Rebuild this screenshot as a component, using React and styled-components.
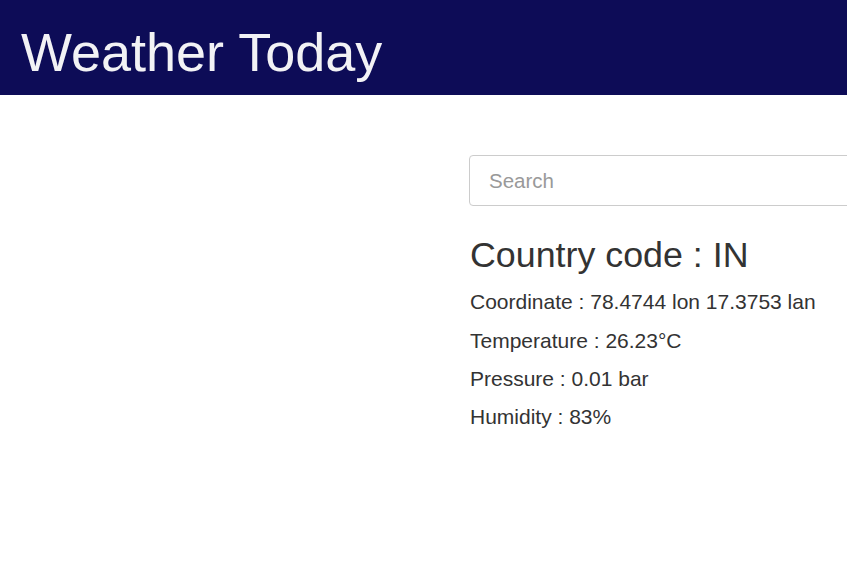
import React from "react";
import styled, { createGlobalStyle } from "styled-components";

const GlobalStyle = createGlobalStyle`
  html, body {
    margin: 0;
    padding: 0;
    background: #ffffff;
    font-family: "Liberation Sans", Arial, sans-serif;
    color: #333333;
  }
`;

const Header = styled.header`
  background-color: #0d0c57;
  height: 95px;
  display: flex;
  align-items: center;
  padding-left: 21px;
  box-sizing: border-box;
`;

const Title = styled.h1`
  margin: 0;
  margin-top: 8px;
  font-size: 54px;
  font-weight: 400;
  color: #f2f2f5;
  line-height: 1;
`;

const Main = styled.main`
  display: grid;
  grid-template-columns: 469px 1fr;
  padding-top: 60px;
`;

const Panel = styled.section`
  grid-column: 2;
  display: flex;
  flex-direction: column;
`;

const SearchInput = styled.input`
  box-sizing: border-box;
  width: 400px;
  height: 51px;
  border: 1px solid #cccccc;
  border-radius: 4px;
  padding: 0 19px;
  font-family: "Liberation Sans", Arial, sans-serif;
  font-size: 20.5px;
  color: #555555;
  outline: none;

  &::placeholder {
    color: #999999;
  }
`;

const CountryCode = styled.h2`
  margin: 30px 0 0 1px;
  font-size: 35.8px;
  font-weight: 400;
  line-height: 1.1;
`;

const InfoList = styled.div`
  display: flex;
  flex-direction: column;
  gap: 14.3px;
  margin-top: 15px;
  margin-left: 1px;
`;

const Info = styled.p`
  margin: 0;
  font-size: 21px;
  line-height: 24px;
`;

export default function App() {
  const rows = [
    "Coordinate : 78.4744 lon 17.3753 lan",
    "Temperature : 26.23°C",
    "Pressure : 0.01 bar",
    "Humidity : 83%",
  ];

  return (
    <>
      <GlobalStyle />
      <Header>
        <Title>Weather Today</Title>
      </Header>
      <Main>
        <Panel>
          <SearchInput placeholder="Search" />
          <CountryCode>Country code : IN</CountryCode>
          <InfoList>
            {rows.map((r) => (
              <Info key={r}>{r}</Info>
            ))}
          </InfoList>
        </Panel>
      </Main>
    </>
  );
}
